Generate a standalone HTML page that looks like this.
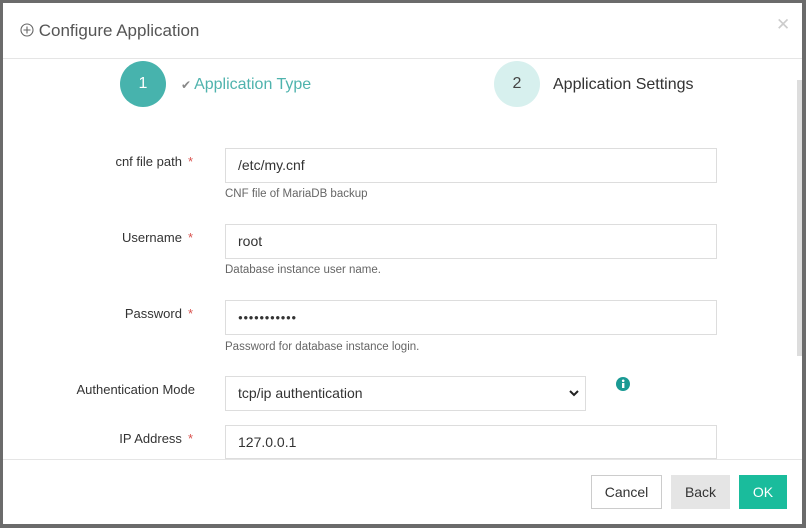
<!DOCTYPE html>
<html><head><meta charset="utf-8"><style>
*{box-sizing:border-box;margin:0;padding:0}
body{width:806px;height:528px;background:#6b6b6b;position:relative;overflow:hidden;font-family:"Liberation Sans",Arial,sans-serif}
.dlg{position:absolute;left:3px;top:3px;width:799px;height:521px;background:#fff}
.abs{position:absolute}
.title{left:17px;top:18px;font-size:17px;color:#555;font-family:"Liberation Sans",sans-serif}
.hl{left:0;top:55px;width:799px;height:1px;background:#e5e5e5}
.fl{left:0;top:456px;width:799px;height:1px;background:#e5e5e5}
.circ{width:46px;height:46px;border-radius:50%;text-align:center;line-height:46px;font-size:16px}
.lbl{font-size:13px;color:#333;text-align:right;width:190px;left:0}
.lbl b{color:#d9534f;font-weight:normal;margin-left:6px}
.inp{left:222px;width:492px;height:35px;border:1px solid #ddd;font-size:14px;color:#333;padding-left:12px;line-height:33px}
.help{left:222px;font-size:11.5px;color:#666}
.btn{top:472px;height:34px;line-height:34px;font-size:14px;text-align:center}
</style></head><body>
<div class="dlg">
<div class="abs title"><svg width="14" height="14" style="vertical-align:-1px"><circle cx="7" cy="7" r="6" fill="none" stroke="#666" stroke-width="1.1"/><path d="M7 3.5v7M3.5 7h7" stroke="#666" stroke-width="1.1"/></svg> Configure Application</div>
<div class="abs" style="left:773px;top:12px;font-size:17px;color:#ccc">✕</div>
<div class="abs hl"></div>
<div class="abs" style="left:794px;top:77px;width:5px;height:276px;background:#ddd"></div>
<div class="abs circ" style="left:117px;top:58px;background:#47b3ad;color:#fff">1</div>
<div class="abs" style="left:178px;top:73px;font-size:16px;color:#4fb3ad"><span style="color:#888;font-size:12px;margin-right:3px">✔</span>Application Type</div>
<div class="abs circ" style="left:491px;top:58px;background:#d7f0ee;color:#444">2</div>
<div class="abs" style="left:550px;top:73px;font-size:16px;color:#333">Application Settings</div>

<div class="abs lbl" style="top:151px">cnf file path<b>*</b></div>
<div class="abs inp" style="top:145px">/etc/my.cnf</div>
<div class="abs help" style="top:185px">CNF file of MariaDB backup</div>

<div class="abs lbl" style="top:227px">Username<b>*</b></div>
<div class="abs inp" style="top:221px">root</div>
<div class="abs help" style="top:261px">Database instance user name.</div>

<div class="abs lbl" style="top:303px">Password<b>*</b></div>
<div class="abs inp" style="top:297px;letter-spacing:0.5px;font-size:8px">●●●●●●●●●●●</div>
<div class="abs help" style="top:338px">Password for database instance login.</div>

<div class="abs lbl" style="top:379px;width:192px">Authentication Mode</div>
<div class="abs inp" style="top:373px;width:361px">tcp/ip authentication<svg style="position:absolute;right:6px;top:13px" width="10" height="7"><path d="M1 1l4 4 4-4" fill="none" stroke="#222" stroke-width="2"/></svg></div>
<svg class="abs" style="left:613px;top:374px" width="14" height="14"><circle cx="7" cy="7" r="7" fill="#1a9a94"/><rect x="6" y="6" width="2.4" height="5" fill="#fff"/><circle cx="7.2" cy="3.8" r="1.3" fill="#fff"/></svg>

<div class="abs lbl" style="top:428px">IP Address<b>*</b></div>
<div class="abs inp" style="top:422px;height:34px">127.0.0.1</div>

<div class="abs fl"></div>
<div class="abs btn" style="left:588px;width:71px;border:1px solid #ccc;color:#333;line-height:32px">Cancel</div>
<div class="abs btn" style="left:668px;width:59px;background:#e5e5e5;color:#333">Back</div>
<div class="abs btn" style="left:736px;width:48px;background:#1abc9c;color:#fff">OK</div>
</div>
</body></html>
